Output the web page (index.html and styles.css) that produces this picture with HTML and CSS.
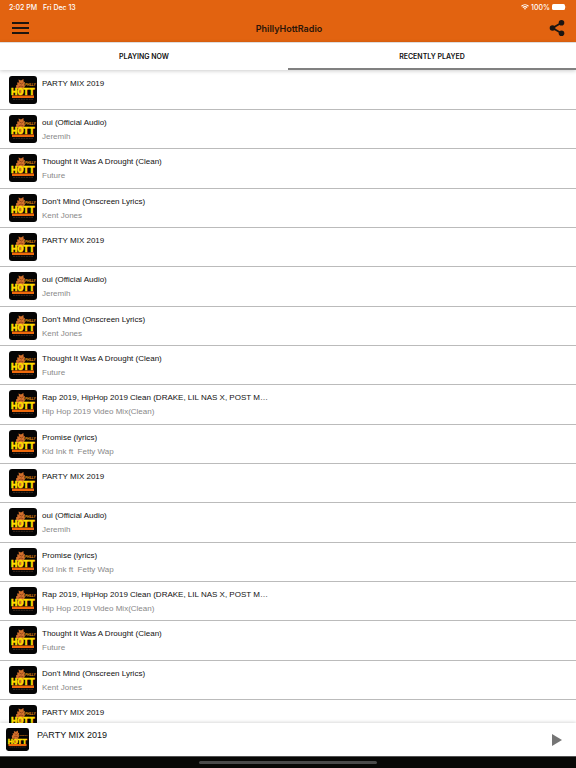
FILE: index.html
```
<!DOCTYPE html>
<html lang="en">
<head>
  <meta charset="UTF-8">
  <meta name="viewport" content="width=device-width, initial-scale=1">
  <title>PhillyHottRadio</title>
  <link rel="stylesheet" href="styles.css">
</head>
<body>
  <!-- Station logo, reused by every row -->
  <svg class="sprite" xmlns="http://www.w3.org/2000/svg" aria-hidden="true">
    <symbol id="logo" viewBox="0 0 28 28">
      <rect width="28" height="28" rx="3" fill="#050505"/>
      <path d="M7.500 13 L7 9.500 L8.500 8.500 L8 6.500 L10 6.500 L9.500 3.500 L12 4.500 L14.500 3 L14.500 5.500 L16 6.500 L15.500 8.500 L16 10 L15 12 L14 18 L11 18 L10.500 13 Z" fill="#d2702c"/>
      <path d="M10.500 7 L12.500 8 L14.500 6.500 M9.500 11 L12 10 L14.500 11" fill="none" stroke="#7a3512" stroke-width="0.700"/>
      <text class="logo-philly" x="16" y="10">PHILLY</text>
      <text class="logo-hott" x="2" y="19">HOTT</text>
      <rect x="3" y="19.500" width="22" height="2.500" fill="#f06a0c"/>
      <path d="M4 23.300 H24" stroke="#3a2c24" stroke-width="1" stroke-dasharray="2 0.600"/>
    </symbol>
  </svg>

  <header class="header">
    <div class="status">
      <span>2:02 PM</span>
      <span>Fri Dec 13</span>
      <span class="status-right">
        <svg class="wifi" viewBox="0 0 16 12" aria-hidden="true">
          <path d="M1 4.500 C5 0.500 11 0.500 15 4.500 M3.700 7.300 C6.200 5 9.800 5 12.300 7.300" fill="none" stroke="#fff" stroke-width="2.200"/>
          <path d="M5.600 9 C7 8 9 8 10.400 9 L8 11.700 Z" fill="#fff"/>
        </svg>
        100%
        <svg class="battery" viewBox="0 0 15 6" aria-hidden="true">
          <rect x="0" y="0" width="13" height="6" rx="1.500" fill="#fff"/>
          <path d="M13.700 2 Q14.700 3 13.700 4 Z" fill="#fff"/>
        </svg>
      </span>
    </div>
    <div class="navbar">
      <button class="icon-button" type="button" aria-label="Menu">
        <svg class="menu-icon" viewBox="0 0 17 14">
          <path d="M0 2 H17 M0 7 H17 M0 12 H17" stroke="#1d150f" stroke-width="2"/>
        </svg>
      </button>
      <h1 class="title">PhillyHottRadio</h1>
      <button class="icon-button" type="button" aria-label="Share">
        <svg class="share-icon" viewBox="0 0 16 18">
          <path d="M13 3.500 L3.500 9 L13 14.500" fill="none" stroke="#1a1512" stroke-width="1.800"/>
          <circle cx="12.500" cy="3.700" r="2.800" fill="#1a1512"/>
          <circle cx="3.500" cy="9" r="2.800" fill="#1a1512"/>
          <circle cx="12.500" cy="14.300" r="2.800" fill="#1a1512"/>
        </svg>
      </button>
    </div>
  </header>

  <nav class="tabs">
    <button class="tab" type="button">PLAYING NOW</button>
    <button class="tab tab-active" type="button">RECENTLY PLAYED</button>
  </nav>

  <main class="content">
    <ul class="tracks">
      <li class="track">
        <svg class="art"><use href="#logo"/></svg>
        <div class="info"><div class="song">PARTY MIX 2019</div></div>
      </li>
      <li class="track">
        <svg class="art"><use href="#logo"/></svg>
        <div class="info"><div class="song">oui (Official Audio)</div><div class="artist">Jeremih</div></div>
      </li>
      <li class="track">
        <svg class="art"><use href="#logo"/></svg>
        <div class="info"><div class="song">Thought It Was A Drought (Clean)</div><div class="artist">Future</div></div>
      </li>
      <li class="track">
        <svg class="art"><use href="#logo"/></svg>
        <div class="info"><div class="song">Don't Mind (Onscreen Lyrics)</div><div class="artist">Kent Jones</div></div>
      </li>
      <li class="track">
        <svg class="art"><use href="#logo"/></svg>
        <div class="info"><div class="song">PARTY MIX 2019</div></div>
      </li>
      <li class="track">
        <svg class="art"><use href="#logo"/></svg>
        <div class="info"><div class="song">oui (Official Audio)</div><div class="artist">Jeremih</div></div>
      </li>
      <li class="track">
        <svg class="art"><use href="#logo"/></svg>
        <div class="info"><div class="song">Don't Mind (Onscreen Lyrics)</div><div class="artist">Kent Jones</div></div>
      </li>
      <li class="track">
        <svg class="art"><use href="#logo"/></svg>
        <div class="info"><div class="song">Thought It Was A Drought (Clean)</div><div class="artist">Future</div></div>
      </li>
      <li class="track">
        <svg class="art"><use href="#logo"/></svg>
        <div class="info"><div class="song">Rap 2019, HipHop 2019 Clean (DRAKE, LIL NAS X, POST M…</div><div class="artist">Hip Hop 2019 Video Mix(Clean)</div></div>
      </li>
      <li class="track">
        <svg class="art"><use href="#logo"/></svg>
        <div class="info"><div class="song">Promise (lyrics)</div><div class="artist">Kid Ink ft  Fetty Wap</div></div>
      </li>
      <li class="track">
        <svg class="art"><use href="#logo"/></svg>
        <div class="info"><div class="song">PARTY MIX 2019</div></div>
      </li>
      <li class="track">
        <svg class="art"><use href="#logo"/></svg>
        <div class="info"><div class="song">oui (Official Audio)</div><div class="artist">Jeremih</div></div>
      </li>
      <li class="track">
        <svg class="art"><use href="#logo"/></svg>
        <div class="info"><div class="song">Promise (lyrics)</div><div class="artist">Kid Ink ft  Fetty Wap</div></div>
      </li>
      <li class="track">
        <svg class="art"><use href="#logo"/></svg>
        <div class="info"><div class="song">Rap 2019, HipHop 2019 Clean (DRAKE, LIL NAS X, POST M…</div><div class="artist">Hip Hop 2019 Video Mix(Clean)</div></div>
      </li>
      <li class="track">
        <svg class="art"><use href="#logo"/></svg>
        <div class="info"><div class="song">Thought It Was A Drought (Clean)</div><div class="artist">Future</div></div>
      </li>
      <li class="track">
        <svg class="art"><use href="#logo"/></svg>
        <div class="info"><div class="song">Don't Mind (Onscreen Lyrics)</div><div class="artist">Kent Jones</div></div>
      </li>
      <li class="track">
        <svg class="art"><use href="#logo"/></svg>
        <div class="info"><div class="song">PARTY MIX 2019</div></div>
      </li>
    </ul>
  </main>

  <footer class="player">
    <svg class="art art-small"><use href="#logo"/></svg>
    <div class="player-song">PARTY MIX 2019</div>
    <button class="icon-button" type="button" aria-label="Play">
      <svg class="play-icon" viewBox="0 0 10 12"><path d="M0 0 L10 6 L0 12 Z" fill="#757575"/></svg>
    </button>
  </footer>
  <div class="home-area"><div class="home-indicator"></div></div>
</body>
</html>
```
FILE: styles.css
```
* {
  box-sizing: border-box;
}
body {
  margin: 0;
  display: flex;
  flex-direction: column;
  height: 100vh;
  overflow: hidden;
  background-color: #fff;
  font-family: "Liberation Sans", Arial, sans-serif;
  font-size: 8px;
  color: #111;
}
button {
  margin: 0;
  padding: 0;
  border: 0;
  background: none;
  font: inherit;
  color: inherit;
  cursor: pointer;
}
svg {
  display: block;
}
.sprite {
  display: none;
}

/* Header */
.header {
  flex: none;
  background-color: #e26310;
  font-family: Inter, sans-serif;
}
.status {
  display: flex;
  align-items: center;
  gap: 6px;
  height: 14px;
  padding: 0 9px;
  font-size: 7px;
  font-weight: 500;
  color: #fff;
}
.status-right {
  display: flex;
  align-items: center;
  gap: 2px;
  margin-left: auto;
}
.wifi {
  width: 8px;
  height: 6px;
}
.battery {
  width: 15px;
  height: 6px;
}
.navbar {
  display: flex;
  align-items: center;
  justify-content: space-between;
  height: 28px;
  padding: 0 11px 0 12px;
}
.title {
  margin: 0;
  font-size: 9px;
  font-weight: 600;
  color: #2b1509;
}
.menu-icon {
  width: 17px;
  height: 14px;
}
.share-icon {
  width: 16px;
  height: 18px;
}

/* Tabs */
.tabs {
  position: relative;
  flex: none;
  display: flex;
  height: 28px;
  background-color: #fff;
  box-shadow: 0 1px 4px rgba(0, 0, 0, 0.2);
  z-index: 1;
}
.tab {
  flex: 1;
  padding-top: 2px;
  border-top: 1px solid #ddd;
  border-bottom: 2px solid transparent;
  font-family: Inter, sans-serif;
  font-size: 7px;
  font-weight: 600;
}
.tab-active {
  border-bottom-color: #808080;
}

/* Recently played list */
.content {
  flex: 1;
  min-height: 0;
  overflow: hidden;
}
.tracks {
  margin: 0;
  padding: 1px 0 0;
  list-style: none;
}
.track {
  display: flex;
  gap: 5px;
  padding: 5px 9px;
  border-bottom: 1px solid #bbb;
}
.track:nth-child(3n) {
  padding-bottom: 6px;
}
.art {
  flex: none;
  width: 28px;
  height: 28px;
}
.info {
  min-width: 0;
  padding-top: 1px;
  margin-bottom: -1px;
  white-space: pre;
  line-height: 14px;
}
.artist {
  color: #888;
}
.logo-philly {
  font: italic bold 3px "Liberation Sans", sans-serif;
  fill: #f59a10;
}
.logo-hott {
  font: 900 9px Roboto, sans-serif;
  fill: #ffdc00;
  stroke: #ffdc00;
  stroke-width: 0.4px;
}

/* Player bar */
.player {
  position: relative;
  flex: none;
  display: flex;
  align-items: center;
  gap: 8px;
  height: 33px;
  padding: 0 14px 0 6px;
  background-color: #fff;
  box-shadow: 0 -1px 3px rgba(0, 0, 0, 0.15);
}
.art-small {
  width: 23px;
  height: 23px;
}
.player-song {
  flex: 1;
  align-self: flex-start;
  font-size: 9px;
  line-height: 24px;
}
.play-icon {
  width: 10px;
  height: 12px;
}
.home-area {
  flex: none;
  display: flex;
  justify-content: center;
  align-items: center;
  height: 12px;
  border-top: 1px solid #555;
  background-color: #080806;
}
.home-indicator {
  width: 31%;
  height: 3px;
  border-radius: 2px;
  background-color: #4a4a4a;
}
```
